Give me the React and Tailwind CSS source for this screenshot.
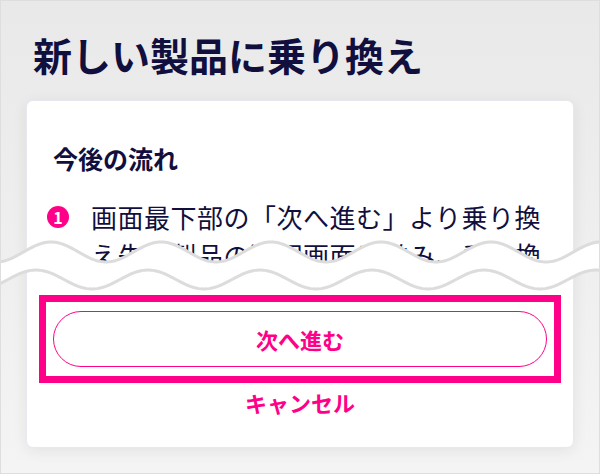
import React from "react";

function wavePoints(center, amp, period, peakX) {
  const pts = [];
  for (let x = -6; x <= 606; x += 2) {
    const y = center - amp * Math.cos((2 * Math.PI * (x - peakX)) / period);
    pts.push([x, y]);
  }
  return pts;
}

function Wave() {
  const top = wavePoints(251, 10, 110, 50);
  const bottom = wavePoints(278.5, 9.5, 112, 35);
  const toPath = (pts) => pts.map((p, i) => `${i ? "L" : "M"}${p[0].toFixed(1)} ${p[1].toFixed(2)}`).join(" ");
  const fill =
    toPath(top) +
    " " +
    bottom
      .slice()
      .reverse()
      .map((p) => `L${p[0].toFixed(1)} ${p[1].toFixed(2)}`)
      .join(" ") +
    " Z";
  return (
    <svg className="absolute left-0 top-0 pointer-events-none" width="600" height="474" viewBox="0 0 600 474">
      <path d={fill} fill="#ffffff" />
      <path d={toPath(top)} fill="none" stroke="#dcdcdc" strokeWidth="3" />
      <path d={toPath(bottom)} fill="none" stroke="#dcdcdc" strokeWidth="3" />
    </svg>
  );
}

export default function App() {
  const font = { fontFamily: '"Noto Sans CJK JP", "Noto Sans", sans-serif' };
  return (
    <div
      className="relative w-[600px] h-[474px] overflow-hidden bg-gradient-to-b from-[#e9e9e9] to-[#f4f4f4] border border-[#dedede]"
      style={font}
    >
      <h1 className="pt-[29px] pl-[32px] h-[99px] text-[39px] leading-[48px] font-bold text-[#110f3d]">
        新しい製品に乗り換え
      </h1>
      <div className="mx-[25px] rounded-[7px] bg-white border border-[#e8e8f0] shadow-[0_3px_14px_rgba(40,40,70,0.08)] px-[26px] pt-[41px] pb-[30px]">
        <h2 className="text-[25px] leading-[32px] font-bold text-[#110f3d]">今後の流れ</h2>
        <div className="mt-[24px] ml-[-6px] flex items-start h-[76px] overflow-hidden">
          <span className="mt-[8px] flex-none w-[22px] h-[22px] rounded-full bg-[#ff0088] text-white text-[16px] font-bold leading-none flex items-center justify-center">
            1
          </span>
          <p className="ml-[22px] text-[26px] leading-[38px] tracking-[0.5px] text-[#110f3d]">
            画面最下部の「次へ進む」より乗り換え先の製品の選択画面に進み、乗り換えの手続きを行ってください。
          </p>
        </div>
        <div className="mt-[21px] mx-[-14px] border-[7px] border-[#ff0088] px-[7px] pt-[9px] pb-[9px]">
          <div className="h-[56px] rounded-full border-[1.5px] border-[#ff0088] flex items-center justify-center text-[22px] font-bold text-[#ff0088]">
            次へ進む
          </div>
        </div>
        <div className="mt-[4px] text-center text-[22px] leading-[30px] font-bold text-[#ff0088]">キャンセル</div>
      </div>
      <Wave />
    </div>
  );
}
